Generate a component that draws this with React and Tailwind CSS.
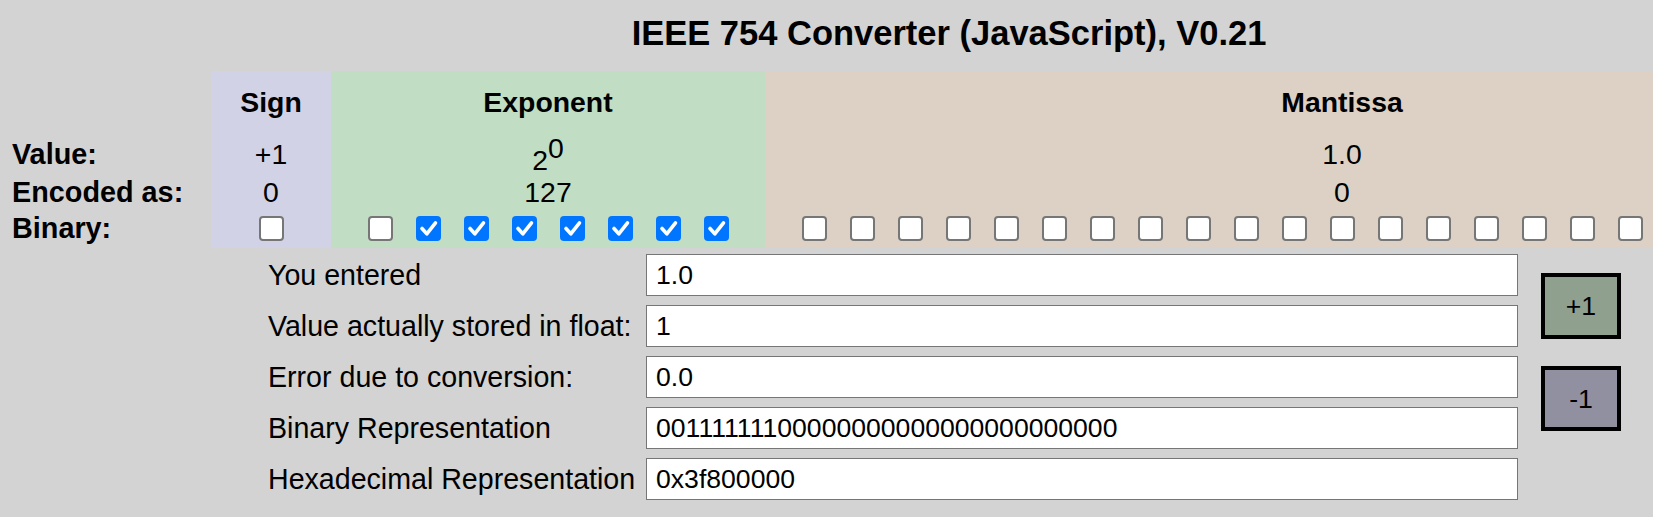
import React from 'react';

const Box = ({ checked }) =>
  checked ? (
    <span className="flex h-[25px] w-[25px] items-center justify-center rounded-[4px] bg-[#0075ff]">
      <svg width="25" height="25" viewBox="0 0 25 25">
        <path d="M6 12.5 L10.8 17.8 L19.5 6.8" fill="none" stroke="#fff" strokeWidth="3.6" strokeLinecap="round" strokeLinejoin="round" />
      </svg>
    </span>
  ) : (
    <span className="block h-[25px] w-[25px] rounded-[4px] border-2 border-[#767676] bg-white" />
  );

const expBits = [0, 1, 1, 1, 1, 1, 1, 1];
const manBits = Array.from({ length: 23 }, () => 0);

const rows = [
  ['You entered', '1.0'],
  ['Value actually stored in float:', '1'],
  ['Error due to conversion:', '0.0'],
  ['Binary Representation', '00111111100000000000000000000000'],
  ['Hexadecimal Representation', '0x3f800000'],
];

const cell = 'flex items-center justify-center leading-[32px]';

export default function App() {
  return (
    <div className="min-h-screen w-full overflow-hidden bg-[#d3d3d3] font-['Liberation_Sans',Arial,sans-serif] text-black">
      <div className="w-[1898px]">
        <h1 className="h-[71px] pt-[14px] text-center text-[34.5px] font-bold leading-[39px]">
          IEEE 754 Converter (JavaScript), V0.21
        </h1>

        <div className="grid grid-cols-[211px_120px_434px_1154px] grid-rows-[61px_44px_32px_40px] text-[28.4px]">
          {/* header */}
          <div />
          <div className={`${cell} bg-[#d2d2e6] font-bold`}>Sign</div>
          <div className={`${cell} bg-[#c1ddc3] font-bold`}>Exponent</div>
          <div className={`${cell} bg-[#ddd1c6] font-bold`}>Mantissa</div>

          {/* value */}
          <div className="flex items-center pl-[12px] text-[28.8px] font-bold leading-[32px]">Value:</div>
          <div className={`${cell} bg-[#d2d2e6]`}>+1</div>
          <div className="flex items-start justify-center bg-[#c1ddc3] leading-[32px]">
            <span className="pt-[12px]">2</span>
            <span>0</span>
          </div>
          <div className={`${cell} bg-[#ddd1c6]`}>1.0</div>

          {/* encoded */}
          <div className="flex items-center pl-[12px] text-[28.8px] font-bold leading-[32px]">Encoded as:</div>
          <div className={`${cell} bg-[#d2d2e6]`}>0</div>
          <div className={`${cell} bg-[#c1ddc3]`}>127</div>
          <div className={`${cell} bg-[#ddd1c6]`}>0</div>

          {/* binary */}
          <div className="flex items-center pl-[12px] text-[28.8px] font-bold leading-[32px]">Binary:</div>
          <div className={`${cell} bg-[#d2d2e6]`}>
            <Box checked={false} />
          </div>
          <div className="flex items-center bg-[#c1ddc3] px-[25px]">
            {expBits.map((b, i) => (
              <span key={i} className="flex w-[48px] justify-center">
                <Box checked={b === 1} />
              </span>
            ))}
          </div>
          <div className="flex items-center bg-[#ddd1c6] px-[25px]">
            {manBits.map((b, i) => (
              <span key={i} className="flex w-[48px] justify-center">
                <Box checked={b === 1} />
              </span>
            ))}
          </div>
        </div>

        <div className="mt-[6px] flex pl-[268px]">
          <div className="grid grid-cols-[378px_872px] gap-y-[9px]">
            {rows.map(([label, value]) => (
              <React.Fragment key={label}>
                <div className="flex h-[42px] items-center whitespace-nowrap text-[28.6px] leading-[32px]">{label}</div>
                <input
                  readOnly
                  value={value}
                  className="h-[42px] w-[872px] border border-[#767676] bg-white pl-[9px] text-[26.6px] outline-none"
                />
              </React.Fragment>
            ))}
          </div>
          <div className="ml-[23px] flex flex-col gap-[27px] pt-[19px]">
            <button className="h-[66px] w-[80px] border-4 border-black bg-[#8fa08f] text-[26.67px]">+1</button>
            <button className="h-[65px] w-[80px] border-4 border-black bg-[#9090a0] text-[26.67px]">-1</button>
          </div>
        </div>
      </div>
    </div>
  );
}
